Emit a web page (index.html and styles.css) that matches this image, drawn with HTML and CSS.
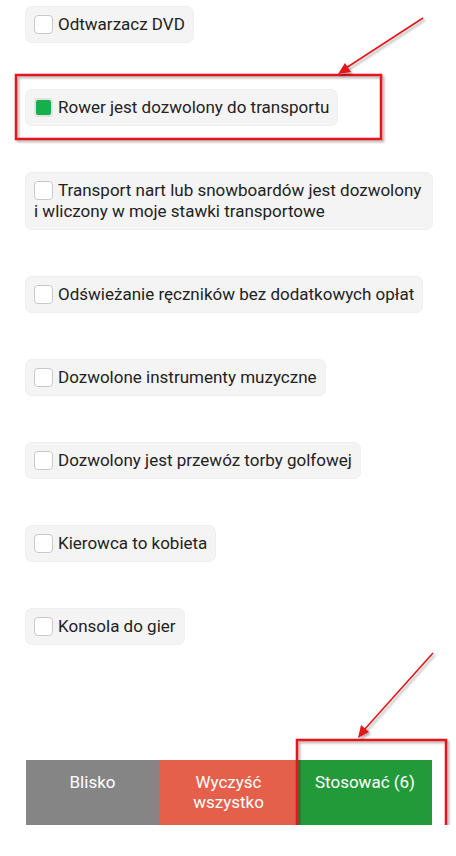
FILE: index.html
```html
<!DOCTYPE html>
<html lang="pl">
  <head>
    <meta charset="UTF-8" />
    <meta name="viewport" content="width=device-width, initial-scale=1.0" />
    <title>Filtry</title>
    <link rel="stylesheet" href="styles.css">
  </head>
  <body>
    <div class="filters">
      <ul class="options">
        <li><label class="chip"><span class="box"></span>Odtwarzacz DVD</label></li>
        <li><label class="chip"><span class="box checked"></span>Rower jest dozwolony do transportu</label></li>
        <li><label class="chip"><span class="box"></span>Transport nart lub snowboardów jest dozwolony i wliczony w moje stawki transportowe</label></li>
        <li><label class="chip"><span class="box"></span>Odświeżanie ręczników bez dodatkowych opłat</label></li>
        <li><label class="chip"><span class="box"></span>Dozwolone instrumenty muzyczne</label></li>
        <li><label class="chip"><span class="box"></span>Dozwolony jest przewóz torby golfowej</label></li>
        <li><label class="chip"><span class="box"></span>Kierowca to kobieta</label></li>
        <li><label class="chip"><span class="box"></span>Konsola do gier</label></li>
      </ul>
      <div class="actions">
        <div class="btn close">Blisko</div>
        <div class="btn clear">Wyczyść wszystko</div>
        <div class="btn apply">Stosować (6)</div>
      </div>
    </div>

    <!-- annotations -->
    <svg class="marks" width="456" height="856" viewBox="0 0 456 856">
      <defs>
        <filter id="sh" x="-10%" y="-10%" width="130%" height="130%">
          <feDropShadow dx="2" dy="2" stdDeviation="1.2" flood-color="#000" flood-opacity="0.3" />
        </filter>
      </defs>
      <g filter="url(#sh)" fill="none" stroke="#e3161b" stroke-width="2.5">
        <rect x="16" y="75" width="365" height="64" />
        <rect x="297" y="740" width="149" height="102" />
        <line x1="423" y1="18" x2="346" y2="68" stroke-width="1.6" />
        <line x1="433" y1="653" x2="364" y2="730" stroke-width="1.6" />
      </g>
      <g filter="url(#sh)" fill="#e3161b">
        <polygon points="338,74 345,63 351,72" />
        <polygon points="358,738 361,725 369,732" />
      </g>
    </svg>
  </body>
</html>
```

FILE: styles.css
```css
body,
ul,
li {
  margin: 0;
  padding: 0;
}
ul {
  list-style: none;
}
body {
  font-family: Roboto, "Noto Sans", sans-serif;
  color: #222;
  background: #fff;
  position: relative;
}
.filters {
  width: 406px;
  padding: 7px 0 0 26px;
}
.options li {
  margin-bottom: 48px;
}
.options li:last-child {
  margin-bottom: 0;
}
.chip {
  display: inline-block;
  box-sizing: border-box;
  max-width: 406px;
  padding: 7px 8px;
  font-size: 17px;
  line-height: 21px;
  background-color: #f4f4f4;
  border-radius: 6px;
  box-shadow: 0 0 0 1px #efefef;
}
.chip .box {
  display: inline-block;
  box-sizing: border-box;
  width: 19px;
  height: 19px;
  margin-right: 5px;
  vertical-align: -4px;
  background: #fff;
  border: 1px solid #c9c9c9;
  border-radius: 4px;
}
.chip .box.checked {
  background: #15b04b;
  border: 2px solid #e2e2e2;
}
.actions {
  display: grid;
  grid-template-columns: 133px 139px 134px;
  height: 65px;
  margin-top: 116px;
}
.btn {
  padding: 12px 10px 0;
  font-size: 17px;
  line-height: 20px;
  color: #fff;
  text-align: center;
}
.btn.close {
  background-color: #858585;
}
.btn.clear {
  background-color: #e5604a;
  padding: 12px 22px 0;
}
.btn.apply {
  background-color: #239a3a;
}
.marks {
  position: absolute;
  left: 0;
  top: 0;
  pointer-events: none;
}
```
